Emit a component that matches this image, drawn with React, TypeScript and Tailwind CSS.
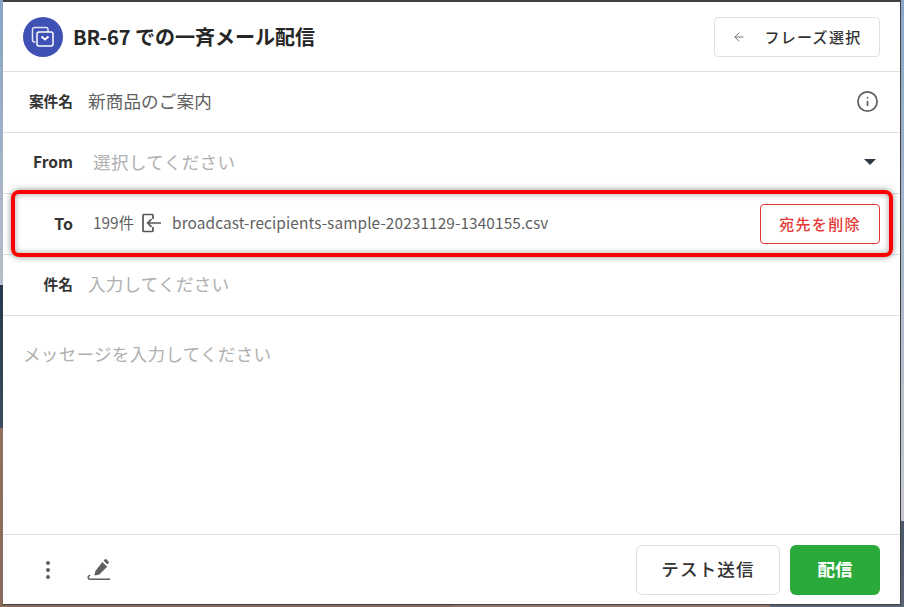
import { ArrowLeft, Info } from "lucide-react";

const font = { fontFamily: '"Noto Sans CJK JP", "Noto Sans", sans-serif' };

function MailStackIcon() {
  return (
    <svg viewBox="0 0 24 24" className="w-6 h-6" fill="none" stroke="white" strokeWidth="1.5">
      <path d="M4.5 17H3.5a2 2 0 0 1-2-2V4.5a2 2 0 0 1 2-2H15a2 2 0 0 1 2 2V7" strokeOpacity="0.85" />
      <rect x="6" y="7" width="16" height="14" rx="2" />
      <path d="M10.5 11.5l3.5 3 3.5-3" strokeWidth="2" />
    </svg>
  );
}

function ImportIcon() {
  return (
    <svg viewBox="0 0 20 20" className="w-5 h-5" fill="none" stroke="#555555" strokeWidth="1.7">
      <path d="M12 6V2.5a1 1 0 0 0-1-1H3a1 1 0 0 0-1 1v15a1 1 0 0 0 1 1h8a1 1 0 0 0 1-1V14" />
      <path d="M20 10H7M10.5 6.2L6.7 10l3.8 3.8" />
    </svg>
  );
}

function SignatureIcon() {
  return (
    <svg viewBox="0 0 24 24" className="w-6 h-6" fill="#5f5f5f">
      <path d="M17.6 2.6l1.3-1.3a1 1 0 0 1 1.4 0l2.4 2.4a1 1 0 0 1 0 1.4l-1.3 1.3z" />
      <path d="M16.4 3.9l4.8 4.8-7.6 7.5a2 2 0 0 1-1 .5l-4.2.9.9-4.2a2 2 0 0 1 .5-1z" />
      <path d="M3.5 17.5c-1.6.4-2 3.7.6 3.7h19.4" fill="none" stroke="#5f5f5f" strokeWidth="1.6" strokeLinecap="round" />
    </svg>
  );
}

export default function App() {
  return (
    <div style={font} className="relative w-[904px] h-[607px] overflow-hidden pl-[3px] pr-[3px] pb-[2px]">
      {/* blurred desktop photo behind the dialog */}
      <div className="absolute inset-0 flex">
        <div className="w-[452px] bg-[linear-gradient(to_bottom,#86a4c4_0px,#b9bdc9_285px,#27384e_285px,#3d4b5e_428px,#8f7160_428px,#8a6a5a_607px)]" />
        <div className="w-[318px] bg-[#8f7364]" />
        <div className="flex-1 bg-[linear-gradient(to_bottom,#8aa8c8_0px,#c6c8ce_521px,#49586a_521px,#5a6675_607px)]" />
      </div>

      <div className="relative h-full bg-white flex flex-col border-t-2 border-r border-b border-[#404040] text-[#333333]">
        <header className="h-[70px] shrink-0 border-b border-[#e0e0e0] flex items-center justify-between pl-5 pr-5">
          <div className="flex items-center gap-[10px]">
            <div className="w-10 h-10 rounded-full bg-[#3f51b5] flex items-center justify-center">
              <MailStackIcon />
            </div>
            <h1 className="text-[20px] font-bold text-[#262626]">BR-67 での一斉メール配信</h1>
          </div>
          <button className="w-[166px] h-10 rounded border border-[#e0e0e0] flex items-center justify-center gap-[18px] pt-px text-[15px] font-medium text-[#333333]">
            <ArrowLeft className="w-3.5 h-3.5 text-[#666666]" strokeWidth={1.5} />
            <span className="tracking-[1.3px]">フレーズ選択</span>
          </button>
        </header>

        <div className="h-[61px] shrink-0 border-b border-[#e0e0e0] flex items-center pl-[24px] pr-[21px] pb-[2px]">
          <span className="w-[46px] whitespace-nowrap text-right text-[14.7px] font-bold text-[#333333]">案件名</span>
          <span className="ml-[15px] flex-1 text-[17.6px] tracking-[0.1px] text-[#5f5f5f]">新商品のご案内</span>
          <Info className="w-[23px] h-[23px] text-[#5f5f5f]" strokeWidth={1.8} />
        </div>

        <div className="h-[61px] shrink-0 border-b border-[#e0e0e0] flex items-center pl-[24px] pr-6 pb-[2px]">
          <span className="w-[46px] text-right text-[15.5px] font-bold text-[#333333]">From</span>
          <span className="ml-[20px] flex-1 text-[17.6px] tracking-[0.35px] text-[#b0b0b0]">選択してください</span>
          <span className="w-0 h-0 border-x-[6px] border-x-transparent border-t-[6px] border-t-[#2f3a45]" />
        </div>

        <div className="h-[61px] shrink-0 border-b border-[#e0e0e0] flex items-center pl-[24px] pr-5">
          <span className="w-[46px] text-right text-[16px] font-bold text-[#333333] -mt-[2px]">To</span>
          <span className="ml-[20px] text-[15.4px] text-[#5f5f5f] -mt-[2px]">199件</span>
          <span className="ml-[7px] -mt-[2px]"><ImportIcon /></span>
          <span className="ml-[11px] flex-1 text-[15.4px] tracking-[0.1px] text-[#5f5f5f] -mt-[2px]">broadcast-recipients-sample-20231129-1340155.csv</span>
          <button className="w-[120px] h-10 rounded border border-[#e53935] text-[15px] font-medium text-[#e53935] tracking-[1.3px]">
            宛先を削除
          </button>
        </div>

        <div className="h-[61px] shrink-0 border-b border-[#e0e0e0] flex items-center pl-[24px] pr-5 pb-[2px]">
          <span className="w-[46px] text-right text-[14.7px] font-bold text-[#333333]">件名</span>
          <span className="ml-[15px] text-[17.6px] tracking-[0.2px] text-[#b0b0b0]">入力してください</span>
        </div>

        <div className="flex-1 pl-[20px] pr-[21px] pt-[25px] text-[17.6px] tracking-[0.25px] text-[#b0b0b0]">メッセージを入力してください</div>

        <footer className="h-[70px] shrink-0 border-t border-[#e0e0e0] flex items-center pl-[43px] pr-5">
          <div className="flex flex-col gap-[3px]">
            <span className="w-[4px] h-[4px] rounded-full bg-[#5f5f5f]" />
            <span className="w-[4px] h-[4px] rounded-full bg-[#5f5f5f]" />
            <span className="w-[4px] h-[4px] rounded-full bg-[#5f5f5f]" />
          </div>
          <span className="ml-[36px]"><SignatureIcon /></span>
          <div className="ml-auto flex gap-[10px]">
            <button className="w-[144px] h-[50px] rounded-md border border-[#e0e0e0] text-[17.6px] font-medium text-[#333333] tracking-[1.1px]">
              テスト送信
            </button>
            <button className="w-[90px] h-[50px] rounded-md bg-[#2aaa3a] text-[17.6px] font-bold text-white">配信</button>
          </div>
        </footer>

        {/* red annotation drawn over the To row */}
        <div className="absolute left-2 top-[188px] w-[882px] h-[67px] rounded-lg border-4 border-[#ff0000] shadow-[0_0_6px_rgba(0,0,0,0.45),inset_0_0_6px_rgba(0,0,0,0.35)]" />
      </div>
    </div>
  );
}
